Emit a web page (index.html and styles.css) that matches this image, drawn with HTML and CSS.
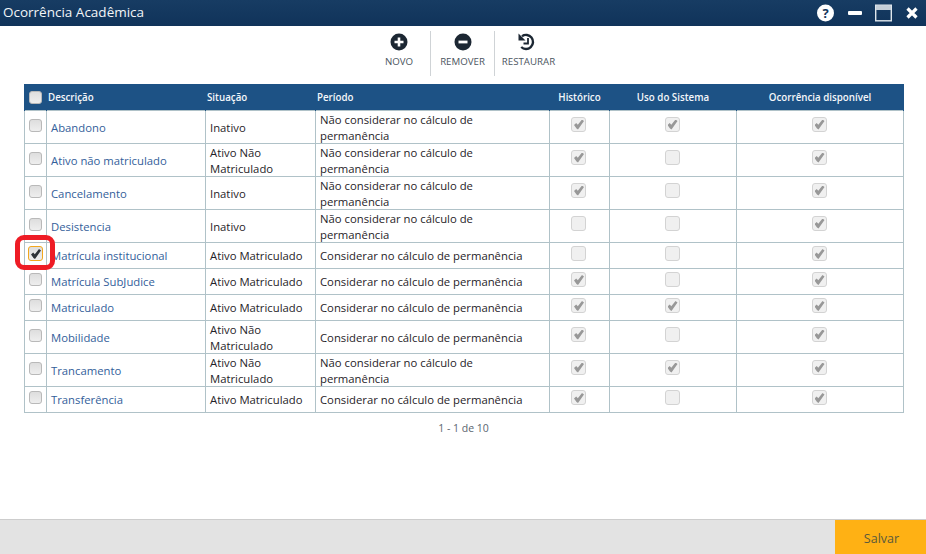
FILE: index.html
```html
<!DOCTYPE html>
<html lang="pt">

<head>
  <meta charset="UTF-8">
  <title>Ocorrência Acadêmica</title>
  <link rel="stylesheet" href="styles.css">
</head>

<body>
  <div class="title-bar">
    <span class="title">Ocorrência Acadêmica</span>
    <div class="window-btns">
      <svg width="17" height="18" viewBox="0 0 17 18"><circle cx="8.5" cy="9" r="8.5" fill="#fff"/><text x="8.5" y="13.5" text-anchor="middle" class="help-mark">?</text></svg>
      <svg class="minimize" width="14" height="18" viewBox="0 0 14 18"><rect x="0" y="7" width="14" height="4" rx="1" fill="#fff"/></svg>
      <svg width="17" height="18" viewBox="0 0 17 18"><rect x="0.7" y="1.2" width="15.6" height="15.6" fill="none" stroke="#dfe6ec" stroke-width="1.4"/><rect x="1" y="2" width="15" height="4" fill="#c4ced8"/></svg>
      <svg width="12" height="18" viewBox="0 0 12 18"><path d="M1.5 4.5 L10.5 13.5 M10.5 4.5 L1.5 13.5" stroke="#fff" stroke-width="3.2" fill="none"/></svg>
    </div>
  </div>

  <div class="toolbar">
    <div class="tool">
      <svg width="18" height="18" viewBox="0 0 18 18"><circle cx="9" cy="9" r="8.5" fill="#1c2733"/><path d="M9 4.5 V13.5 M4.5 9 H13.5" stroke="#fff" stroke-width="2.6"/></svg>
      <span>NOVO</span>
    </div>
    <div class="tool">
      <svg width="18" height="18" viewBox="0 0 18 18"><circle cx="9" cy="9" r="8.5" fill="#1c2733"/><path d="M4.5 9 H13.5" stroke="#fff" stroke-width="2.8"/></svg>
      <span>REMOVER</span>
    </div>
    <div class="tool">
      <svg class="restore" width="18" height="18" viewBox="0 0 18 18"><path d="M4 3.2 A7 7 0 1 1 3.2 14" fill="none" stroke="#1c2733" stroke-width="2.4"/><path d="M0.5 0.5 V7.5 H7.5 Z" fill="#1c2733"/><path d="M10 5 V10.5 H5.5" fill="none" stroke="#1c2733" stroke-width="1.8"/></svg>
      <span>RESTAURAR</span>
    </div>
  </div>

  <div class="content">
    <table class="grid">
      <colgroup>
        <col class="c-check">
        <col class="c-desc">
        <col class="c-sit">
        <col class="c-per">
        <col class="c-hist">
        <col class="c-uso">
        <col class="c-disp">
      </colgroup>
      <thead>
        <tr>
          <th class="center"><span class="chk head-chk"></span></th>
          <th>Descrição</th>
          <th>Situação</th>
          <th>Período</th>
          <th class="center">Histórico</th>
          <th class="center">Uso do Sistema</th>
          <th class="center">Ocorrência disponível</th>
        </tr>
      </thead>
      <tbody>
        <tr class="tall">
          <td class="center"><span class="chk"></span></td>
          <td><a>Abandono</a></td>
          <td>Inativo</td>
          <td>Não considerar no cálculo de permanência</td>
          <td class="center"><span class="chk off on"></span></td>
          <td class="center"><span class="chk off on"></span></td>
          <td class="center"><span class="chk off on"></span></td>
        </tr>
        <tr class="tall">
          <td class="center"><span class="chk"></span></td>
          <td><a>Ativo não matriculado</a></td>
          <td>Ativo Não Matriculado</td>
          <td>Não considerar no cálculo de permanência</td>
          <td class="center"><span class="chk off on"></span></td>
          <td class="center"><span class="chk off"></span></td>
          <td class="center"><span class="chk off on"></span></td>
        </tr>
        <tr class="tall">
          <td class="center"><span class="chk"></span></td>
          <td><a>Cancelamento</a></td>
          <td>Inativo</td>
          <td>Não considerar no cálculo de permanência</td>
          <td class="center"><span class="chk off on"></span></td>
          <td class="center"><span class="chk off"></span></td>
          <td class="center"><span class="chk off on"></span></td>
        </tr>
        <tr class="tall">
          <td class="center"><span class="chk"></span></td>
          <td><a>Desistencia</a></td>
          <td>Inativo</td>
          <td>Não considerar no cálculo de permanência</td>
          <td class="center"><span class="chk off"></span></td>
          <td class="center"><span class="chk off"></span></td>
          <td class="center"><span class="chk off on"></span></td>
        </tr>
        <tr class="short">
          <td class="center"><span class="chk on focus"></span></td>
          <td><a>Matrícula institucional</a></td>
          <td>Ativo Matriculado</td>
          <td>Considerar no cálculo de permanência</td>
          <td class="center"><span class="chk off"></span></td>
          <td class="center"><span class="chk off"></span></td>
          <td class="center"><span class="chk off on"></span></td>
        </tr>
        <tr class="short">
          <td class="center"><span class="chk"></span></td>
          <td><a>Matrícula SubJudice</a></td>
          <td>Ativo Matriculado</td>
          <td>Considerar no cálculo de permanência</td>
          <td class="center"><span class="chk off on"></span></td>
          <td class="center"><span class="chk off"></span></td>
          <td class="center"><span class="chk off on"></span></td>
        </tr>
        <tr class="short">
          <td class="center"><span class="chk"></span></td>
          <td><a>Matriculado</a></td>
          <td>Ativo Matriculado</td>
          <td>Considerar no cálculo de permanência</td>
          <td class="center"><span class="chk off on"></span></td>
          <td class="center"><span class="chk off on"></span></td>
          <td class="center"><span class="chk off on"></span></td>
        </tr>
        <tr class="tall">
          <td class="center"><span class="chk"></span></td>
          <td><a>Mobilidade</a></td>
          <td>Ativo Não Matriculado</td>
          <td>Considerar no cálculo de permanência</td>
          <td class="center"><span class="chk off on"></span></td>
          <td class="center"><span class="chk off"></span></td>
          <td class="center"><span class="chk off on"></span></td>
        </tr>
        <tr class="tall">
          <td class="center"><span class="chk"></span></td>
          <td><a>Trancamento</a></td>
          <td>Ativo Não Matriculado</td>
          <td>Não considerar no cálculo de permanência</td>
          <td class="center"><span class="chk off on"></span></td>
          <td class="center"><span class="chk off on"></span></td>
          <td class="center"><span class="chk off on"></span></td>
        </tr>
        <tr class="short">
          <td class="center"><span class="chk"></span></td>
          <td><a>Transferência</a></td>
          <td>Ativo Matriculado</td>
          <td>Considerar no cálculo de permanência</td>
          <td class="center"><span class="chk off on"></span></td>
          <td class="center"><span class="chk off"></span></td>
          <td class="center"><span class="chk off on"></span></td>
        </tr>
      </tbody>
    </table>
    <div class="pager">1 - 1 de 10</div>
    <div class="highlight"></div>
  </div>

  <div class="footer">
    <div class="save">Salvar</div>
  </div>
</body>

</html>
```

FILE: styles.css
```css
html,body{
  margin: 0;
  height: 100%;
}
body{
  display: flex;
  flex-direction: column;
  height: 554px;
  overflow: hidden;
  background: #fff;
  font-family: "Open Sans", "Liberation Sans", sans-serif;
  font-size: 11.3px;
  color: #1f2328;
}
.title-bar{
  flex-shrink: 0;
  height: 26px;
  box-sizing: border-box;
  padding: 0 8px 2px 3px;
  display: flex;
  align-items: center;
  justify-content: space-between;
  background: linear-gradient(#173c63, #10335a);
}
.title{
  font-size: 13.5px;
  color: #f2f5f8;
}
.window-btns{
  display: flex;
  align-items: center;
  gap: 14px;
  padding-top: 2px;
}
.minimize{
  margin-right: -1px;
}
.help-mark{
  font-size: 13px;
  font-weight: 700;
  fill: #12355b;
}
.toolbar{
  flex-shrink: 0;
  height: 58px;
  box-sizing: border-box;
  padding: 5px 0 0 4px;
  display: flex;
  justify-content: center;
}
.tool{
  height: 45px;
  box-sizing: border-box;
  padding-top: 2px;
  display: flex;
  flex-direction: column;
  align-items: center;
  gap: 4px;
  border-left: 1px solid #cfd3d6;
  font-size: 9.7px;
  color: #4c5560;
}
.tool:nth-child(1){
  width: 62px;
  border-left: 0;
}
.tool:nth-child(2){
  width: 64px;
}
.tool:nth-child(3){
  width: 68px;
}
.restore{
  margin-right: 3px;
}
.content{
  position: relative;
  flex: 1;
  padding: 0 23px 0 24px;
}
.grid{
  width: 879px;
  table-layout: fixed;
  border-collapse: collapse;
}
.c-check{ width: 22px; }
.c-desc{ width: 159px; }
.c-sit{ width: 110px; }
.c-per{ width: 234px; }
.c-hist{ width: 60px; }
.c-uso{ width: 127px; }
.c-disp{ width: 167px; }
.grid th{
  height: 25px;
  padding: 0 1px;
  border: 1px solid #1d5285;
  border-bottom: 0;
  background: #1d5285;
  color: #f4f7fa;
  font-size: 9.75px;
  font-weight: 600;
  text-align: left;
}
.grid td{
  padding: 1px 4px 0;
  border: 1px solid #b0c2c8;
  line-height: 15.5px;
  vertical-align: middle;
}
.tall td{
  height: 31px;
}
.short td{
  height: 24px;
}
.grid a{
  color: #33609a;
}
.grid .center{
  padding: 0;
  text-align: center;
}
.chk{
  position: relative;
  display: inline-block;
  box-sizing: border-box;
  width: 13px;
  height: 13px;
  margin-bottom: 4px;
  vertical-align: middle;
  border: 1px solid #b9b9b9;
  border-radius: 3px;
  background: linear-gradient(#dedede, #eee);
}
.head-chk{
  margin-bottom: 0;
}
.chk.off,
.chk.focus{
  width: 15px;
  height: 15px;
}
.chk.off{
  margin-right: 2px;
  border-color: #d3d3d3;
  background: #f0f0f0;
}
.tall .chk.off{
  margin-bottom: 6px;
}
.chk.on::after{
  content: "";
  position: absolute;
  left: 2px;
  top: 2px;
  width: 10px;
  height: 10px;
  background: #2f3338;
  clip-path: polygon(0 55%, 22% 35%, 38% 52%, 80% 0, 100% 15%, 40% 100%, 25% 90%);
}
.chk.off.on::after{
  background: #989898;
}
.chk.focus{
  border-color: #f2a81d;
}
.pager{
  margin-top: 8px;
  text-align: center;
  font-size: 10.5px;
  color: #5a6570;
}
.highlight{
  position: absolute;
  left: 15px;
  top: 151px;
  width: 30px;
  height: 25px;
  border: 5px solid #ee1c25;
  border-radius: 9px;
}
.footer{
  flex-shrink: 0;
  height: 35px;
  box-sizing: border-box;
  display: flex;
  justify-content: flex-end;
  background: #e3e3e3;
  border-top: 1px solid #cdcdcd;
}
.save{
  width: 91px;
  display: flex;
  align-items: center;
  justify-content: center;
  box-sizing: border-box;
  padding: 2px 0 0 2px;
  background: #ffb114;
  font-size: 12.5px;
  color: #5a5a3c;
}
```
